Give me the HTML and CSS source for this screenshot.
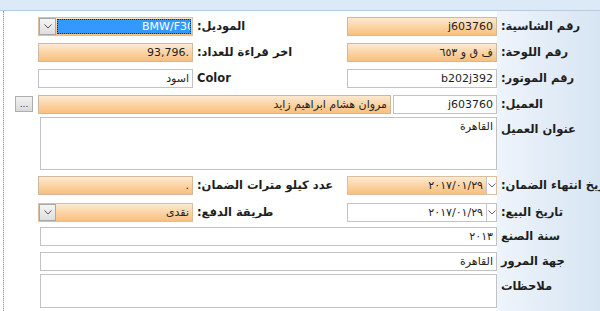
FILE: index.html
```html
<!DOCTYPE html>
<html lang="ar">
<head>
    <meta charset="UTF-8">
    <meta name="viewport" content="width=device-width, initial-scale=1.0">
    <title>بيانات السيارة</title>
    <link rel="stylesheet" href="styles.css">
</head>
<body>

    <div class="titlebar"></div>

    <div class="sheet">

        <div class="row">
            <div class="combo orange c-f2">
                <span class="drop"><svg width="8" height="5" viewBox="0 0 8 5"><polyline points="0.5,0.5 4,4 7.5,0.5" fill="none" stroke="#555" stroke-width="1"/></svg></span>
                <span class="sel"><span>BMW/F30</span></span>
            </div>
            <label class="lbl c-l2">الموديل:</label>
            <input class="field orange c-f1" dir="rtl" value="j603760">
            <label class="lbl c-l1">رقم الشاسية:</label>
        </div>

        <div class="row">
            <input class="field orange c-f2 ltr" value="93,796.">
            <label class="lbl c-l2">اخر قراءة للعداد:</label>
            <input class="field orange c-f1" dir="rtl" value="ف ق و ٦٥٣">
            <label class="lbl c-l1">رقم اللوحة:</label>
        </div>

        <div class="row">
            <input class="field c-f2" dir="rtl" value="اسود">
            <label class="lbl c-l2">Color</label>
            <input class="field c-f1" dir="rtl" value="b202j392">
            <label class="lbl c-l1">رقم الموتور:</label>
        </div>

        <div class="row row-client">
            <button class="dots-btn c-btn">...</button>
            <div class="client c-wide">
                <input class="field orange name" dir="rtl" value="مروان هشام ابراهيم زايد">
                <input class="field code" dir="rtl" value="j603760">
            </div>
            <label class="lbl c-l1">العميل:</label>
        </div>

        <div class="row row-address">
            <textarea class="field memo c-wide" dir="rtl">القاهرة</textarea>
            <label class="lbl lbl-memo c-l1">عنوان العميل</label>
        </div>

        <div class="row row-warranty">
            <input class="field orange c-f2" dir="rtl" value=".">
            <label class="lbl c-l2">عدد كيلو مترات الضمان:</label>
            <div class="date orange c-f1">
                <span class="date-text">٢٠١٧/٠١/٢٩</span>
                <span class="date-drop"><svg width="8" height="5" viewBox="0 0 8 5"><polyline points="0.5,0.5 4,4 7.5,0.5" fill="none" stroke="#666" stroke-width="1"/></svg></span>
            </div>
            <label class="lbl c-l1">تاريخ انتهاء الضمان:</label>
        </div>

        <div class="row row-sale">
            <div class="combo orange c-f2">
                <span class="drop"><svg width="8" height="5" viewBox="0 0 8 5"><polyline points="0.5,0.5 4,4 7.5,0.5" fill="none" stroke="#555" stroke-width="1"/></svg></span>
                <span class="combo-text">نقدى</span>
            </div>
            <label class="lbl c-l2">طريقة الدفع:</label>
            <div class="date c-f1">
                <span class="date-text">٢٠١٧/٠١/٢٩</span>
                <span class="date-drop"><svg width="8" height="5" viewBox="0 0 8 5"><polyline points="0.5,0.5 4,4 7.5,0.5" fill="none" stroke="#666" stroke-width="1"/></svg></span>
            </div>
            <label class="lbl c-l1">تاريخ البيع:</label>
        </div>

        <div class="row row-year">
            <input class="field wide c-wide" dir="rtl" value="٢٠١٣">
            <label class="lbl c-l1">سنة الصنع</label>
        </div>

        <div class="row row-traffic">
            <input class="field wide c-wide" dir="rtl" value="القاهرة">
            <label class="lbl c-l1">جهة المرور</label>
        </div>

        <div class="row row-notes">
            <textarea class="field memo notes c-wide" dir="rtl"></textarea>
            <label class="lbl lbl-memo c-l1">ملاحظات</label>
        </div>

    </div>

</body>
</html>
```

FILE: styles.css
```css
html, body {
    margin: 0;
    height: 100%;
    overflow: hidden;
    background: #fff;
}

body {
    font-family: "DejaVu Sans", sans-serif;
    font-size: 11px;
    color: #1e1e1e;
}

.titlebar {
    height: 10px;
    background: #dceaf8;
    border-bottom: 1px solid #b4cbe1;
}

.sheet {
    margin-left: 3px;
    height: 300px;
    padding-top: 6px;
    border-left: 1px dotted #9c9c9c;
    background: linear-gradient(to right, #fff 493px, #eef4fb 493px, #d7e5f3 100%);
}

/* columns: margin | button | field 2 | label 2 | field 1 | label 1 */
.row {
    display: grid;
    grid-template-columns: 11px 23px 155px 154px 150px minmax(0, 1fr);
    align-items: start;
    height: 26px;
}

.row-client { height: 22px; }
.row-address { height: 59px; }
.row-warranty { height: 27px; }
.row-sale { height: 24px; }
.row-year { height: 25px; }
.row-traffic { height: 22px; }

.c-btn { grid-column: 2; }
.c-f2 { grid-column: 3; }
.c-l2 { grid-column: 4; }
.c-f1 { grid-column: 5; }
.c-l1 { grid-column: 6; }
.c-wide { grid-column: 3 / 6; }

.lbl {
    justify-self: start;
    width: max-content;
    margin-left: 4px;
    direction: rtl;
    white-space: nowrap;
    font-size: 11.5px;
    font-weight: bold;
    line-height: 19px;
}

.lbl-memo {
    margin-top: 3px;
}

.field {
    box-sizing: border-box;
    width: 100%;
    height: 19px;
    margin: 0;
    padding: 0 3px;
    border: 1px solid #c2c2c2;
    background: #fff;
    font-family: "DejaVu Sans", sans-serif;
    font-size: 11px;
    color: #1e1e1e;
    outline: none;
}

.ltr {
    direction: ltr;
    text-align: right;
}

.orange {
    background: linear-gradient(#fde9d0, #f9bf7d);
    border: 1px solid #cdb99d;
}

.wide, .memo {
    margin-left: 2px;
    width: calc(100% - 2px);
}

.memo {
    height: 53px;
    padding: 2px 3px;
    resize: none;
    overflow: hidden;
}

.notes { height: 34px; }

.client {
    display: flex;
    gap: 2px;
}

.client .name { flex: 1; }
.client .code { width: 104px; }

.dots-btn {
    box-sizing: border-box;
    width: 18px;
    height: 16px;
    margin-top: 1px;
    padding: 0;
    border: 1px solid #adadad;
    background: linear-gradient(#f2f2f2, #dadada);
    font-family: "DejaVu Sans", sans-serif;
    font-size: 9px;
    line-height: 10px;
    color: #333;
}

.combo, .date {
    box-sizing: border-box;
    display: flex;
    height: 19px;
    border: 1px solid #c2c2c2;
}

.combo.orange, .date.orange {
    border-color: #d8c09f;
}

.drop {
    box-sizing: border-box;
    display: flex;
    align-items: center;
    justify-content: center;
    width: 17px;
    height: 100%;
    border: 1px solid #a9a9a9;
    background: linear-gradient(#f5f5f5, #dedede);
}

.sel {
    flex: 1;
    margin: 1px;
    overflow: hidden;
    border: 1px dotted #202040;
    background: #3399ff;
    color: #fff;
    text-align: right;
    line-height: 13px;
    white-space: nowrap;
}

.sel span {
    margin-right: -4px;
}

.combo-text, .date-text {
    flex: 1;
    direction: rtl;
    padding: 0 3px;
    line-height: 17px;
}

.date-drop {
    display: flex;
    align-items: center;
    justify-content: center;
    width: 9px;
    border-left: 1px solid #c6c6c6;
    background: #fff;
}
```
